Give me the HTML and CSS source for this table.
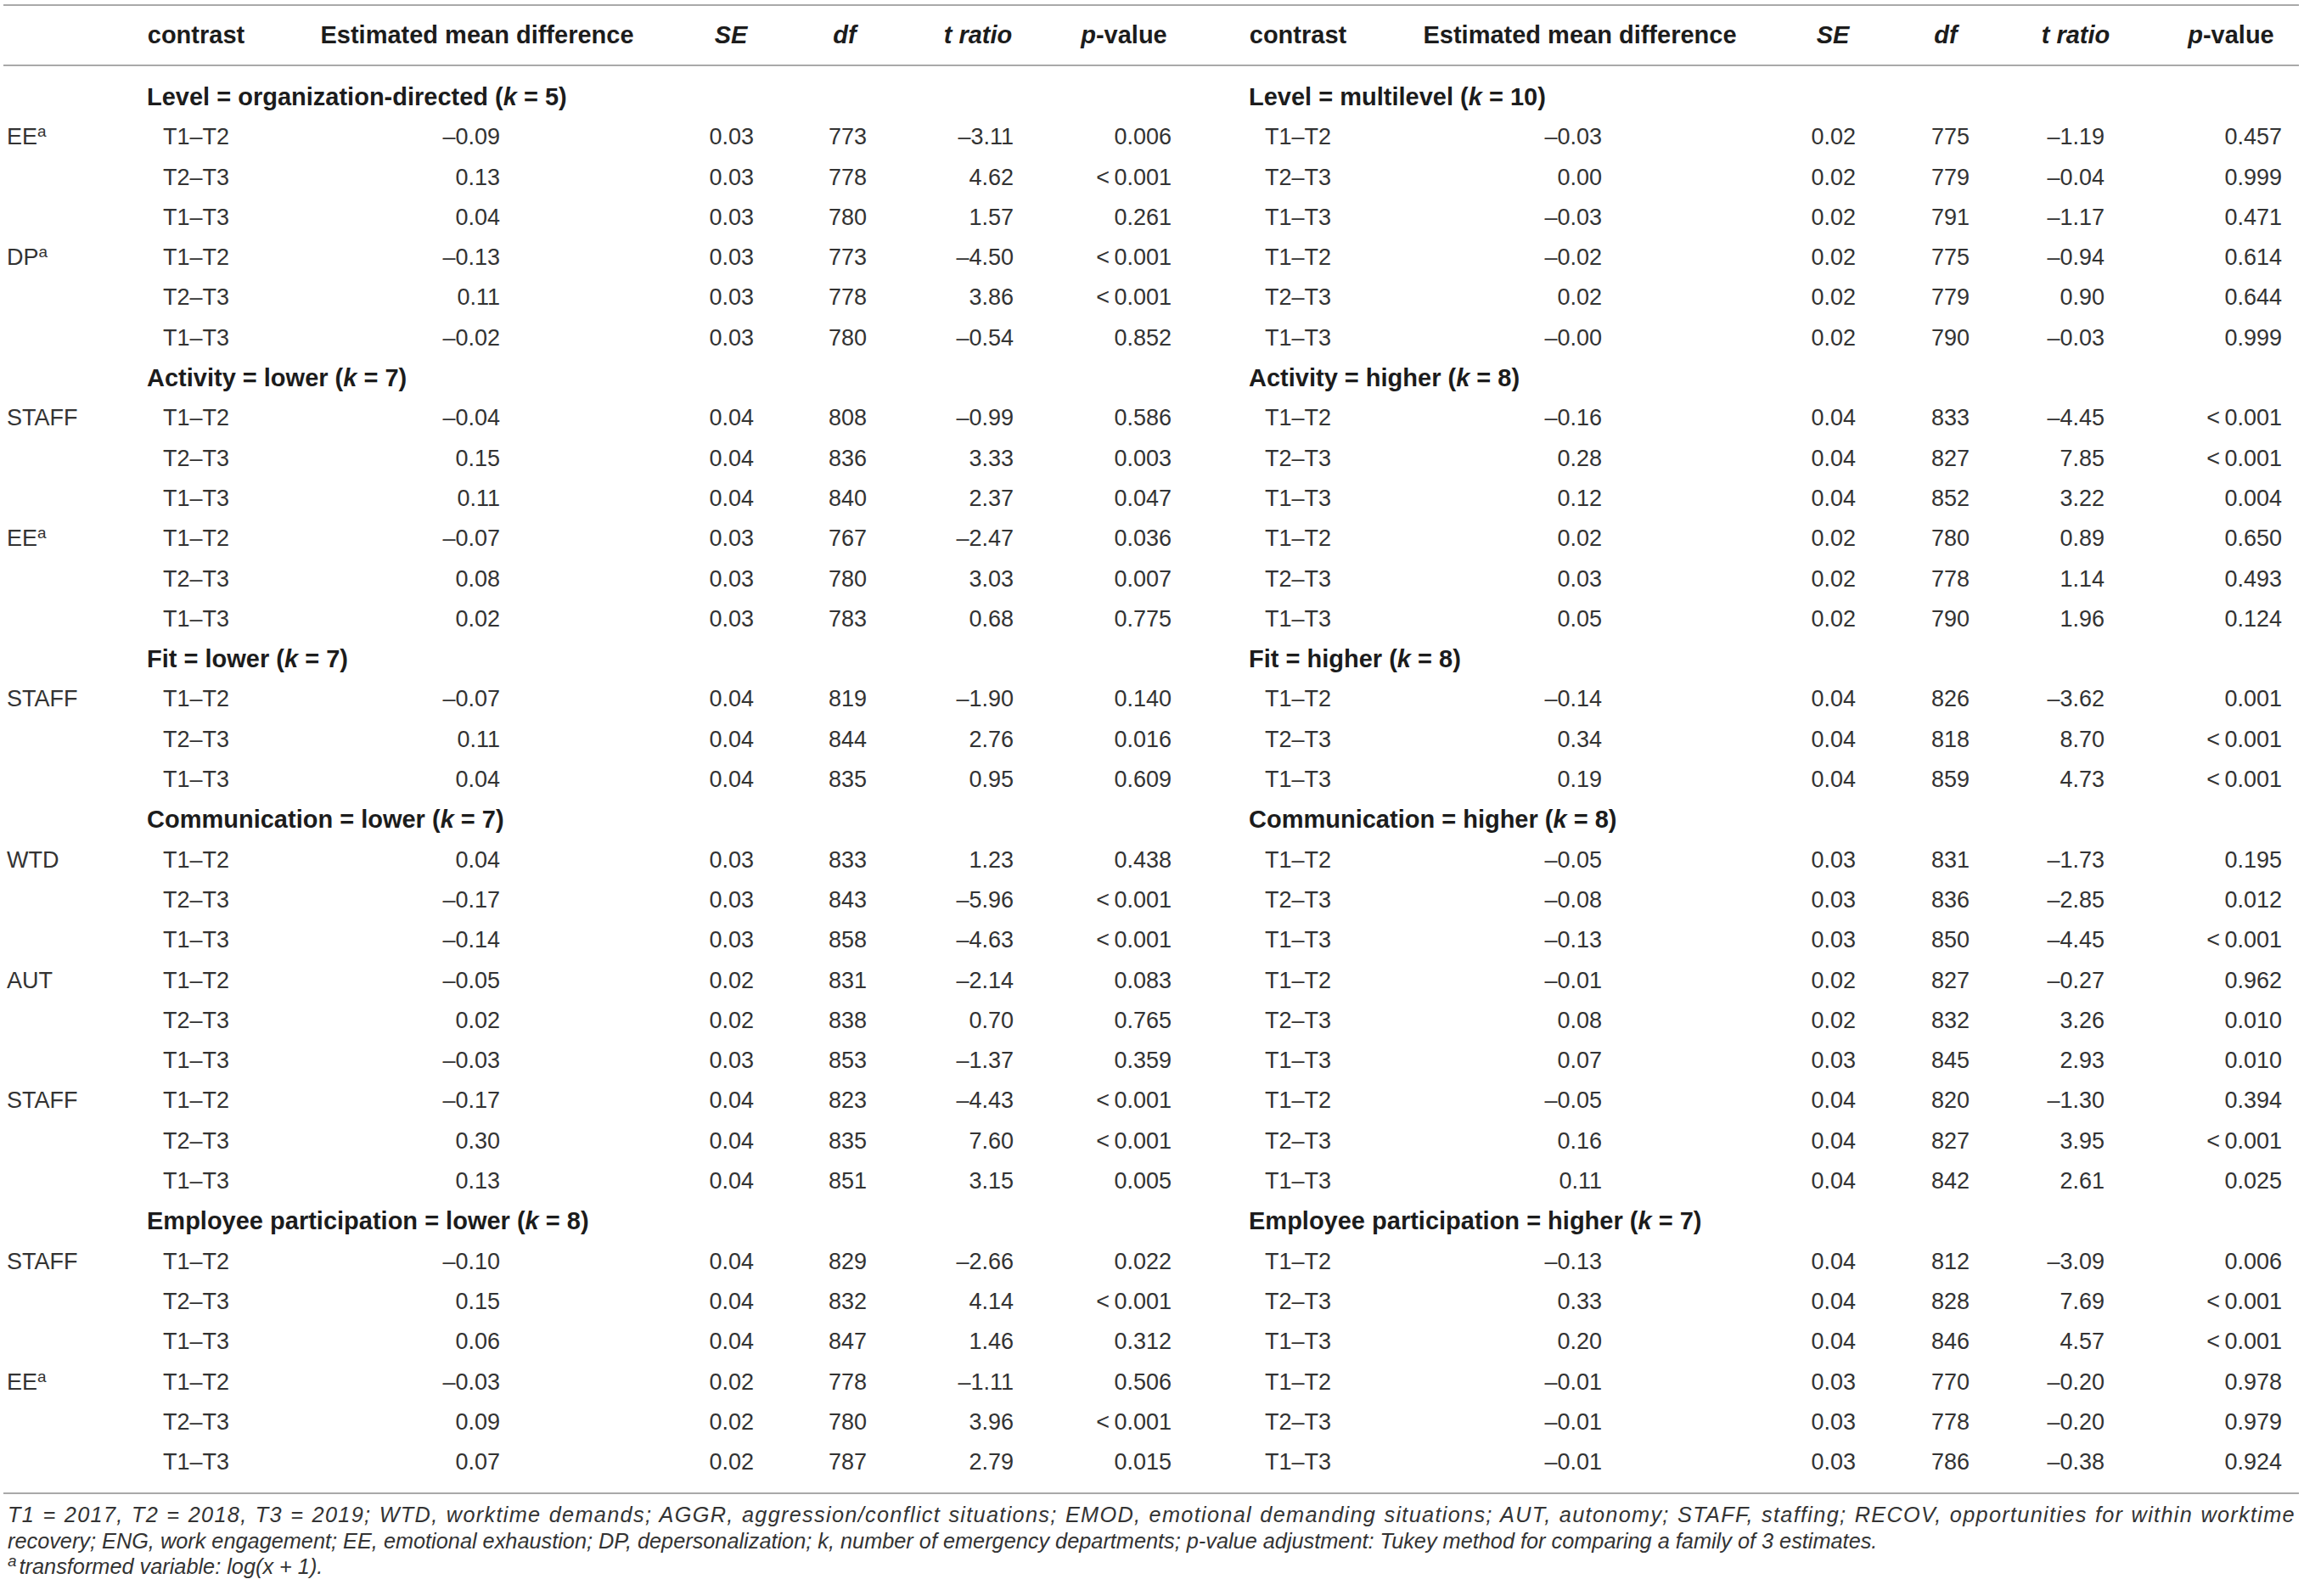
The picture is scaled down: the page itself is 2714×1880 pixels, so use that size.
FILE: index.html
```html
<!DOCTYPE html>
<html lang="en">
<head>
  <meta charset="UTF-8">
  <title>Pairwise contrasts by intervention characteristics</title>
  <link rel="stylesheet" href="styles.css">
</head>
<body>

  <div class="wrap">
    <table class="contrasts">
      <colgroup>
        <col class="c-stub"><col class="c-con"><col class="c-est"><col class="c-se"><col class="c-df"><col class="c-t"><col class="c-p">
        <col class="c-con2"><col class="c-est2"><col class="c-se2"><col class="c-df2"><col class="c-t2"><col class="c-p2">
      </colgroup>
      <thead>
        <tr>
          <th></th>
          <th>contrast</th>
          <th>Estimated mean difference</th>
          <th><i>SE</i></th>
          <th><i>df</i></th>
          <th><i>t ratio</i></th>
          <th><i>p</i>-value</th>
          <th>contrast</th>
          <th>Estimated mean difference</th>
          <th><i>SE</i></th>
          <th><i>df</i></th>
          <th><i>t ratio</i></th>
          <th class="last"><i>p</i>-value</th>
        </tr>
      </thead>
      <tbody>
        <tr class="group first"><td></td><td colspan="6" class="lbl">Level = organization-directed (<i>k</i> = 5)</td><td colspan="6" class="lbl lbl2">Level = multilevel (<i>k</i> = 10)</td></tr>
        <tr class="data"><td>EE<sup>a</sup></td><td>T1–T2</td><td>–0.09</td><td>0.03</td><td>773</td><td>–3.11</td><td>0.006</td><td>T1–T2</td><td>–0.03</td><td>0.02</td><td>775</td><td>–1.19</td><td>0.457</td></tr>
        <tr class="data"><td></td><td>T2–T3</td><td>0.13</td><td>0.03</td><td>778</td><td>4.62</td><td>&lt;&thinsp;0.001</td><td>T2–T3</td><td>0.00</td><td>0.02</td><td>779</td><td>–0.04</td><td>0.999</td></tr>
        <tr class="data"><td></td><td>T1–T3</td><td>0.04</td><td>0.03</td><td>780</td><td>1.57</td><td>0.261</td><td>T1–T3</td><td>–0.03</td><td>0.02</td><td>791</td><td>–1.17</td><td>0.471</td></tr>
        <tr class="data"><td>DP<sup>a</sup></td><td>T1–T2</td><td>–0.13</td><td>0.03</td><td>773</td><td>–4.50</td><td>&lt;&thinsp;0.001</td><td>T1–T2</td><td>–0.02</td><td>0.02</td><td>775</td><td>–0.94</td><td>0.614</td></tr>
        <tr class="data"><td></td><td>T2–T3</td><td>0.11</td><td>0.03</td><td>778</td><td>3.86</td><td>&lt;&thinsp;0.001</td><td>T2–T3</td><td>0.02</td><td>0.02</td><td>779</td><td>0.90</td><td>0.644</td></tr>
        <tr class="data"><td></td><td>T1–T3</td><td>–0.02</td><td>0.03</td><td>780</td><td>–0.54</td><td>0.852</td><td>T1–T3</td><td>–0.00</td><td>0.02</td><td>790</td><td>–0.03</td><td>0.999</td></tr>

        <tr class="group"><td></td><td colspan="6" class="lbl">Activity = lower (<i>k</i> = 7)</td><td colspan="6" class="lbl lbl2">Activity = higher (<i>k</i> = 8)</td></tr>
        <tr class="data"><td>STAFF</td><td>T1–T2</td><td>–0.04</td><td>0.04</td><td>808</td><td>–0.99</td><td>0.586</td><td>T1–T2</td><td>–0.16</td><td>0.04</td><td>833</td><td>–4.45</td><td>&lt;&thinsp;0.001</td></tr>
        <tr class="data"><td></td><td>T2–T3</td><td>0.15</td><td>0.04</td><td>836</td><td>3.33</td><td>0.003</td><td>T2–T3</td><td>0.28</td><td>0.04</td><td>827</td><td>7.85</td><td>&lt;&thinsp;0.001</td></tr>
        <tr class="data"><td></td><td>T1–T3</td><td>0.11</td><td>0.04</td><td>840</td><td>2.37</td><td>0.047</td><td>T1–T3</td><td>0.12</td><td>0.04</td><td>852</td><td>3.22</td><td>0.004</td></tr>
        <tr class="data"><td>EE<sup>a</sup></td><td>T1–T2</td><td>–0.07</td><td>0.03</td><td>767</td><td>–2.47</td><td>0.036</td><td>T1–T2</td><td>0.02</td><td>0.02</td><td>780</td><td>0.89</td><td>0.650</td></tr>
        <tr class="data"><td></td><td>T2–T3</td><td>0.08</td><td>0.03</td><td>780</td><td>3.03</td><td>0.007</td><td>T2–T3</td><td>0.03</td><td>0.02</td><td>778</td><td>1.14</td><td>0.493</td></tr>
        <tr class="data"><td></td><td>T1–T3</td><td>0.02</td><td>0.03</td><td>783</td><td>0.68</td><td>0.775</td><td>T1–T3</td><td>0.05</td><td>0.02</td><td>790</td><td>1.96</td><td>0.124</td></tr>

        <tr class="group"><td></td><td colspan="6" class="lbl">Fit = lower (<i>k</i> = 7)</td><td colspan="6" class="lbl lbl2">Fit = higher (<i>k</i> = 8)</td></tr>
        <tr class="data"><td>STAFF</td><td>T1–T2</td><td>–0.07</td><td>0.04</td><td>819</td><td>–1.90</td><td>0.140</td><td>T1–T2</td><td>–0.14</td><td>0.04</td><td>826</td><td>–3.62</td><td>0.001</td></tr>
        <tr class="data"><td></td><td>T2–T3</td><td>0.11</td><td>0.04</td><td>844</td><td>2.76</td><td>0.016</td><td>T2–T3</td><td>0.34</td><td>0.04</td><td>818</td><td>8.70</td><td>&lt;&thinsp;0.001</td></tr>
        <tr class="data"><td></td><td>T1–T3</td><td>0.04</td><td>0.04</td><td>835</td><td>0.95</td><td>0.609</td><td>T1–T3</td><td>0.19</td><td>0.04</td><td>859</td><td>4.73</td><td>&lt;&thinsp;0.001</td></tr>

        <tr class="group"><td></td><td colspan="6" class="lbl">Communication = lower (<i>k</i> = 7)</td><td colspan="6" class="lbl lbl2">Communication = higher (<i>k</i> = 8)</td></tr>
        <tr class="data"><td>WTD</td><td>T1–T2</td><td>0.04</td><td>0.03</td><td>833</td><td>1.23</td><td>0.438</td><td>T1–T2</td><td>–0.05</td><td>0.03</td><td>831</td><td>–1.73</td><td>0.195</td></tr>
        <tr class="data"><td></td><td>T2–T3</td><td>–0.17</td><td>0.03</td><td>843</td><td>–5.96</td><td>&lt;&thinsp;0.001</td><td>T2–T3</td><td>–0.08</td><td>0.03</td><td>836</td><td>–2.85</td><td>0.012</td></tr>
        <tr class="data"><td></td><td>T1–T3</td><td>–0.14</td><td>0.03</td><td>858</td><td>–4.63</td><td>&lt;&thinsp;0.001</td><td>T1–T3</td><td>–0.13</td><td>0.03</td><td>850</td><td>–4.45</td><td>&lt;&thinsp;0.001</td></tr>
        <tr class="data"><td>AUT</td><td>T1–T2</td><td>–0.05</td><td>0.02</td><td>831</td><td>–2.14</td><td>0.083</td><td>T1–T2</td><td>–0.01</td><td>0.02</td><td>827</td><td>–0.27</td><td>0.962</td></tr>
        <tr class="data"><td></td><td>T2–T3</td><td>0.02</td><td>0.02</td><td>838</td><td>0.70</td><td>0.765</td><td>T2–T3</td><td>0.08</td><td>0.02</td><td>832</td><td>3.26</td><td>0.010</td></tr>
        <tr class="data"><td></td><td>T1–T3</td><td>–0.03</td><td>0.03</td><td>853</td><td>–1.37</td><td>0.359</td><td>T1–T3</td><td>0.07</td><td>0.03</td><td>845</td><td>2.93</td><td>0.010</td></tr>
        <tr class="data"><td>STAFF</td><td>T1–T2</td><td>–0.17</td><td>0.04</td><td>823</td><td>–4.43</td><td>&lt;&thinsp;0.001</td><td>T1–T2</td><td>–0.05</td><td>0.04</td><td>820</td><td>–1.30</td><td>0.394</td></tr>
        <tr class="data"><td></td><td>T2–T3</td><td>0.30</td><td>0.04</td><td>835</td><td>7.60</td><td>&lt;&thinsp;0.001</td><td>T2–T3</td><td>0.16</td><td>0.04</td><td>827</td><td>3.95</td><td>&lt;&thinsp;0.001</td></tr>
        <tr class="data"><td></td><td>T1–T3</td><td>0.13</td><td>0.04</td><td>851</td><td>3.15</td><td>0.005</td><td>T1–T3</td><td>0.11</td><td>0.04</td><td>842</td><td>2.61</td><td>0.025</td></tr>

        <tr class="group"><td></td><td colspan="6" class="lbl">Employee participation = lower (<i>k</i> = 8)</td><td colspan="6" class="lbl lbl2">Employee participation = higher (<i>k</i> = 7)</td></tr>
        <tr class="data"><td>STAFF</td><td>T1–T2</td><td>–0.10</td><td>0.04</td><td>829</td><td>–2.66</td><td>0.022</td><td>T1–T2</td><td>–0.13</td><td>0.04</td><td>812</td><td>–3.09</td><td>0.006</td></tr>
        <tr class="data"><td></td><td>T2–T3</td><td>0.15</td><td>0.04</td><td>832</td><td>4.14</td><td>&lt;&thinsp;0.001</td><td>T2–T3</td><td>0.33</td><td>0.04</td><td>828</td><td>7.69</td><td>&lt;&thinsp;0.001</td></tr>
        <tr class="data"><td></td><td>T1–T3</td><td>0.06</td><td>0.04</td><td>847</td><td>1.46</td><td>0.312</td><td>T1–T3</td><td>0.20</td><td>0.04</td><td>846</td><td>4.57</td><td>&lt;&thinsp;0.001</td></tr>
        <tr class="data"><td>EE<sup>a</sup></td><td>T1–T2</td><td>–0.03</td><td>0.02</td><td>778</td><td>–1.11</td><td>0.506</td><td>T1–T2</td><td>–0.01</td><td>0.03</td><td>770</td><td>–0.20</td><td>0.978</td></tr>
        <tr class="data"><td></td><td>T2–T3</td><td>0.09</td><td>0.02</td><td>780</td><td>3.96</td><td>&lt;&thinsp;0.001</td><td>T2–T3</td><td>–0.01</td><td>0.03</td><td>778</td><td>–0.20</td><td>0.979</td></tr>
        <tr class="data end"><td></td><td>T1–T3</td><td>0.07</td><td>0.02</td><td>787</td><td>2.79</td><td>0.015</td><td>T1–T3</td><td>–0.01</td><td>0.03</td><td>786</td><td>–0.38</td><td>0.924</td></tr>
      </tbody>
    </table>

    <div class="notes">
      <p><span class="full">T1 = 2017, T2 = 2018, T3 = 2019; WTD, worktime demands; AGGR, aggression/conflict situations; EMOD, emotional demanding situations; AUT, autonomy; STAFF, staffing; RECOV, opportunities for within worktime</span>recovery; ENG, work engagement; EE, emotional exhaustion; DP, depersonalization; k, number of emergency departments; p-value adjustment: Tukey method for comparing a family of 3 estimates.</p>
      <p><sup>a</sup>transformed variable: log(x + 1).</p>
    </div>
  </div>

</body>
</html>
```

FILE: styles.css
```css
body {
  margin: 0;
  background: #fff;
  font-family: "Liberation Sans", Arial, sans-serif;
  color: #333;
}
.wrap {
  width: 2704px;
  margin: 5px 0 0 4px;
}
.contrasts {
  width: 2704px;
  table-layout: fixed;
  border-collapse: collapse;
}
.c-stub { width: 161px; }
.c-con { width: 132px; }
.c-est { width: 530px; }
.c-se { width: 68px; }
.c-df { width: 200px; }
.c-t { width: 114px; }
.c-p { width: 230px; }
.c-con2 { width: 180px; }
.c-est2 { width: 484px; }
.c-se2 { width: 112px; }
.c-df2 { width: 154px; }
.c-t2 { width: 152px; }
.c-p2 { width: 187px; }

th {
  height: 69px;
  padding: 0;
  font-size: 29px;
  font-weight: bold;
  color: #1c1c1c;
  text-align: center;
  white-space: nowrap;
  border-top: 2px solid #a9a9a9;
  border-bottom: 2px solid #a9a9a9;
}
th.last {
  padding-left: 27px;
}
td {
  padding: 0;
  height: 47.3px;
  line-height: 47.3px;
  font-size: 27px;
  white-space: nowrap;
}
.group td {
  font-weight: bold;
  font-size: 29px;
  color: #1c1c1c;
}
.group.first td {
  padding-top: 13px;
}
.lbl {
  padding-left: 8px;
}
.lbl2 {
  padding-left: 32px;
}
.data td {
  text-align: right;
}
.data td:nth-child(1) {
  text-align: left;
  padding-left: 4px;
}
.data td:nth-child(2),
.data td:nth-child(8) {
  text-align: center;
}
.data td:nth-child(3) { padding-right: 238px; }
.data td:nth-child(4) { padding-right: 7px; }
.data td:nth-child(5) { padding-right: 74px; }
.data td:nth-child(6) { padding-right: 15px; }
.data td:nth-child(7) { padding-right: 59px; }
.data td:nth-child(9) { padding-right: 216px; }
.data td:nth-child(10) { padding-right: 29px; }
.data td:nth-child(11) { padding-right: 49px; }
.data td:nth-child(12) { padding-right: 42px; }
.data td:nth-child(13) { padding-right: 20px; }
.data.end td {
  padding-bottom: 12px;
  border-bottom: 2px solid #a9a9a9;
}
sup {
  font-size: 0.7em;
  line-height: 0;
  vertical-align: 0.5em;
}
.notes {
  margin-top: 9px;
  padding: 0 4px 0 5px;
  font-size: 25.3px;
  font-style: italic;
  line-height: 30.5px;
  color: #333;
}
.notes p {
  margin: 0;
  white-space: nowrap;
}
.notes .full {
  display: block;
  letter-spacing: 1.3px;
  text-align: justify;
  text-align-last: justify;
}
.notes sup {
  font-size: 0.75em;
  margin-right: 3px;
}
```
